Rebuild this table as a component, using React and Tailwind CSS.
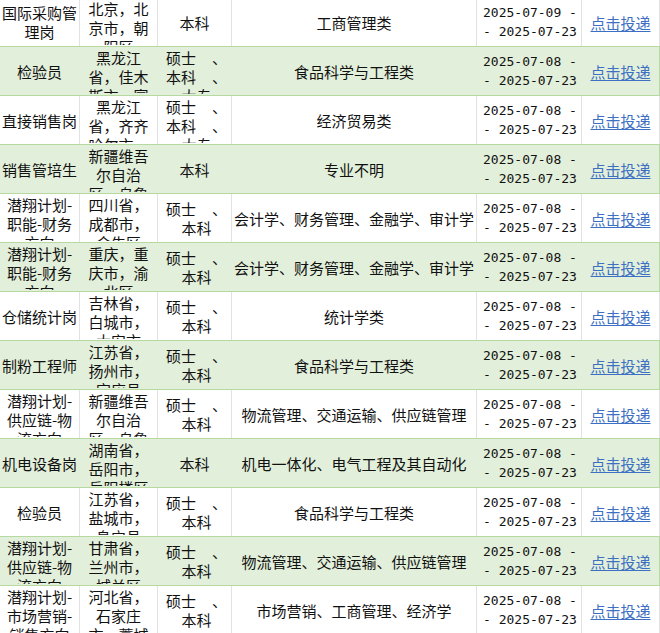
import React from 'react';

const rows = [
  ['国际采购管理岗', '北京，北京市，朝阳区', ['本科'], '工商管理类', '2025-07-09'],
  ['检验员', '黑龙江省，佳木斯市，富锦市', ['硕士', '本科', '大专'], '食品科学与工程类', '2025-07-08'],
  ['直接销售岗', '黑龙江省，齐齐哈尔市，龙沙区', ['硕士', '本科', '大专'], '经济贸易类', '2025-07-08'],
  ['销售管培生', '新疆维吾尔自治区，乌鲁木齐市', ['本科'], '专业不明', '2025-07-08'],
  ['潜翔计划-职能-财务方向', '四川省，成都市，金牛区', ['硕士', '本科'], '会计学、财务管理、金融学、审计学', '2025-07-08'],
  ['潜翔计划-职能-财务方向', '重庆，重庆市，渝北区', ['硕士', '本科'], '会计学、财务管理、金融学、审计学', '2025-07-08'],
  ['仓储统计岗', '吉林省，白城市，大安市', ['硕士', '本科'], '统计学类', '2025-07-08'],
  ['制粉工程师', '江苏省，扬州市，宝应县', ['硕士', '本科'], '食品科学与工程类', '2025-07-08'],
  ['潜翔计划-供应链-物流方向', '新疆维吾尔自治区，乌鲁木齐市', ['硕士', '本科'], '物流管理、交通运输、供应链管理', '2025-07-08'],
  ['机电设备岗', '湖南省，岳阳市，岳阳楼区', ['本科'], '机电一体化、电气工程及其自动化', '2025-07-08'],
  ['检验员', '江苏省，盐城市，阜宁县', ['硕士', '本科'], '食品科学与工程类', '2025-07-08'],
  ['潜翔计划-供应链-物流方向', '甘肃省，兰州市，城关区', ['硕士', '本科'], '物流管理、交通运输、供应链管理', '2025-07-08'],
  ['潜翔计划-市场营销-销售方向', '河北省，石家庄市，藁城区', ['硕士', '本科'], '市场营销、工商管理、经济学', '2025-07-08'],
];

function Degree({ items }) {
  if (items.length === 1) return <div className="text-center">{items[0]}</div>;
  return (
    <div className="pl-2 pr-1">
      {items.map((d, i) =>
        i < items.length - 1 ? (
          <div key={i} className="flex justify-between">
            <span>{d}</span>
            <span>、</span>
          </div>
        ) : (
          <div key={i} className="text-center">{d}</div>
        )
      )}
    </div>
  );
}

function Row({ row, green }) {
  const [title, loc, degrees, major, start] = row;
  const line = green ? 'border-[#e2efda]' : 'border-[#e2e2e2]';
  const cell = 'flex items-center overflow-hidden';
  const clip = 'w-full max-h-[46px] overflow-hidden';
  return (
    <div
      className={
        green
          ? 'grid grid-cols-[79px_78px_74px_245px_105px_79px] h-[50px] bg-[#e2efda] border-y border-[#b6d9a0]'
          : 'grid grid-cols-[79px_78px_74px_245px_105px_79px] h-[48px] bg-white'
      }
    >
      <div className={cell + ' px-[2px]'}>
        <div className={clip + ' text-center'}>{title}</div>
      </div>
      <div className={cell + ' border-l px-2 ' + line}>
        <div className={clip + ' text-center'}>{loc}</div>
      </div>
      <div className={cell + ' border-l ' + line}>
        <div className={clip}>
          <Degree items={degrees} />
        </div>
      </div>
      <div className={cell + ' border-l px-[2px] ' + line}>
        <div className={clip + ' text-center'}>{major}</div>
      </div>
      <div className={cell + ' border-l pl-[6px] ' + line}>
        <div className="font-['DejaVu_Sans_Mono',monospace] text-[13px] whitespace-nowrap">
          <div>{start} -</div>
          <div>- 2025-07-23</div>
        </div>
      </div>
      <div
        className={
          cell +
          ' justify-center border-l border-r ' +
          line +
          (green ? ' border-r-[#b6d9a0]' : ' border-r-[#e2e2e2]')
        }
      >
        <a href="#" className="text-[#3d6fc2] underline underline-offset-2">点击投递</a>
      </div>
    </div>
  );
}

export default function App() {
  return (
    <div className="w-[660px] h-[633px] overflow-hidden bg-white text-[#111] text-[15px] leading-[19px] font-['Noto_Sans_CJK_SC','Noto_Sans',sans-serif]">
      <div className="-mt-[2px]">
        {rows.map((r, i) => (
          <Row key={i} row={r} green={i % 2 === 1} />
        ))}
      </div>
    </div>
  );
}
